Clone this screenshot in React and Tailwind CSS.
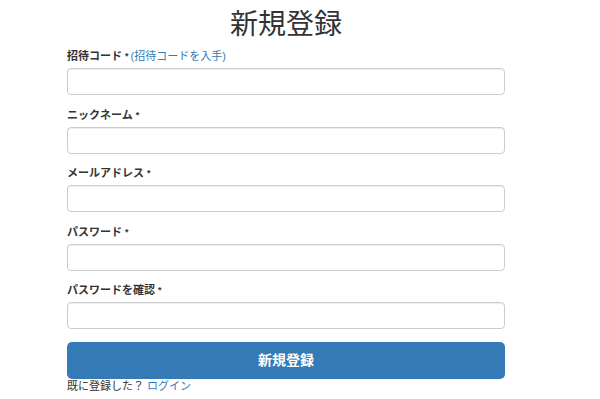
import React from "react";

const fields = [
    { label: "招待コード", name: "invite", extra: true },
    { label: "ニックネーム", name: "nickname" },
    { label: "メールアドレス", name: "email" },
    { label: "パスワード", name: "password" },
    { label: "パスワードを確認", name: "password_confirm" },
];

export default function App() {
    return (
        <div
            className="h-[399px] w-[600px] bg-white text-[#333]"
            style={{ fontFamily: '"Helvetica Neue", "Liberation Sans", "Noto Sans CJK JP", sans-serif' }}
        >
            <div className="ml-[67px] w-[438px]">
                <h1 className="h-[49px] pt-[6px] text-center text-[28px] leading-[37px] font-normal">
                    新規登録
                </h1>

                <form className="flex flex-col">
                    {fields.map((f) => (
                        <div key={f.name} className="mb-[12.5px]">
                            <label className="mb-[5px] block text-[11px] leading-[14px] font-bold">
                                {f.label}
                                <span className="ml-[3px] align-top text-[9px]">*</span>
                                {f.extra && (
                                    <a href="#" className="ml-[2px] font-normal text-[#337ab7]">
                                        (招待コードを入手)
                                    </a>
                                )}
                            </label>
                            <input
                                type="text"
                                name={f.name}
                                className="block h-[27px] w-full rounded-[4px] border border-[#ccc] bg-white px-3 shadow-[inset_0_1px_1px_rgba(0,0,0,0.075)] outline-none"
                            />
                        </div>
                    ))}

                    <button
                        type="submit"
                        className="h-[37px] w-full rounded-[5px] bg-[#337ab7] text-[14px] font-bold text-white"
                    >
                        新規登録
                    </button>
                </form>

                <p className="text-[11px] leading-[14px]">
                    既に登録した？ <a href="#" className="text-[#337ab7]">ログイン</a>
                </p>
            </div>
        </div>
    );
}
